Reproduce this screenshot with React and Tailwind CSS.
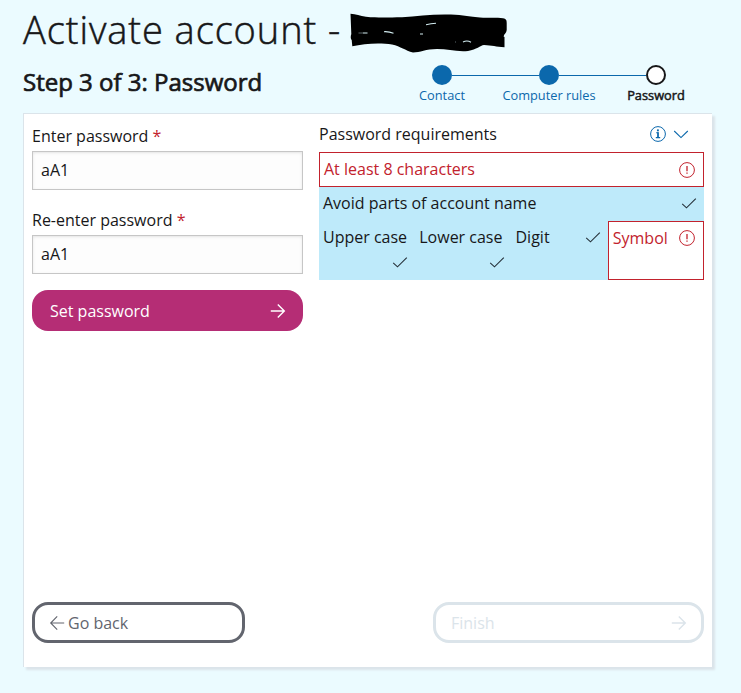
import React from 'react';

const Check = () => (
  <svg width="16" height="16" viewBox="0 0 16 16" fill="none" stroke="#26323a" strokeWidth="1.1" className="shrink-0">
    <path d="M1.2 8.8 5.5 12.8 14.8 3.6" />
  </svg>
);

const Alert = () => (
  <svg width="16" height="16" viewBox="0 0 16 16" fill="none" stroke="#c2222d" strokeWidth="1" className="shrink-0">
    <circle cx="8" cy="8" r="7.4" />
    <path d="M8 4v5.2M8 10.4v1.4" strokeWidth="1.3" />
  </svg>
);

const Info = () => (
  <svg width="16" height="16" viewBox="0 0 16 16" fill="none" stroke="#0b68ac" strokeWidth="1">
    <circle cx="8" cy="8" r="7.4" />
    <path d="M6.2 6.8h1.8v4.7M5.8 11.6h4.4" strokeWidth="1.1" />
    <path d="M8 6.3v5.3" strokeWidth="1.5" />
    <path d="M7.9 3.4v1.9" strokeWidth="1.9" />
  </svg>
);

const Arrow = ({ left = false, strokeWidth = 1.4 }) => (
  <svg width="16" height="16" viewBox="0 0 16 16" fill="none" stroke="currentColor" strokeWidth={strokeWidth} className={left ? 'rotate-180' : ''}>
    <path d="M.8 8h13.5M7.8 1.4 14.3 8l-6.500 6.600" />
  </svg>
);

const Step = ({ label, current = false, first = false, last = false }) => (
  <li className="flex w-[107px] flex-col items-center">
    <div className="flex w-full items-center">
      <span className={`h-px flex-1 ${first ? '' : 'bg-[#0b68ac]'}`} />
      <span className={`size-5 rounded-full ${current ? 'border-2 border-[#171719] bg-white' : 'bg-[#0b68ac]'}`} />
      <span className={`h-px flex-1 ${last ? '' : 'bg-[#0b68ac]'}`} />
    </div>
    <span className={`whitespace-nowrap pl-px text-[12.8px] leading-[20px] ${current ? 'text-[#171719] [-webkit-text-stroke:0.5px_#171719]' : 'text-[#0b68ac]'}`}>
      {label}
    </span>
  </li>
);

const Field = ({ id, label }) => (
  <div className="mb-4">
    <label htmlFor={id} className="block h-[29px] leading-[28px]">
      {label} <span className="text-[#c2222d]">*</span>
    </label>
    <input
      id={id}
      type="text"
      defaultValue="aA1"
      className="block h-[39px] w-full border border-[#c6c6c6] bg-[#fdfdfd] px-2 pb-[2px] shadow-[inset_0_1px_3px_#e4e4e4] outline-none"
    />
  </div>
);

// Hand-scribbled redaction over the account name
const Scribble = () => (
  <svg width="158" height="40" viewBox="350 13 158 40" className="ml-[9px] mt-[3px] shrink-0">
    <path
      d="M350.5 13.8C356 14 360 16 366 16.800C378 18 388 17.500 402 17.300C416 16.500 430 14.400 446 14.500C460 14.500 466 16 480 17.500C488 18 497 17.500 503 18.200C506 18.600 506.700 20 506.700 23V30C506.500 33 504 34 503.600 36.500L504.500 37V47.200C496 47 492 45.200 484 45C480 45.500 477 49.500 468 51C456 52 448 49 437 49C426 49 420 52.500 413 52.500C405 50.500 401 46.500 392 44.500C380 42.500 364 43.500 352.300 46.300L351.700 40C350.500 39 350.500 36 351.300 34Z"
      fill="#000"
    />
    <path d="M363 33h4.500M384 31.700q5-.3 9.500 1.500M426 24.700q5-1 10-1.400M420 34h3M463 42q4-2 8 .2" fill="none" stroke="#d3edf1" strokeWidth="1.1" />
    <path d="M358.500 33h4.500M455 42h1" fill="none" stroke="#5c696c" strokeWidth="1" />
  </svg>
);

export default function App() {
  return (
    <div className="h-[693px] w-[741px] overflow-hidden bg-[#ebfbff] pl-[23px] pr-[29px] font-['Open_Sans',sans-serif] text-base text-[#171719]">
      <header className="h-[113px]">
        <div className="flex h-[61px] items-start pt-[10px]">
          <h1 className="-mt-px whitespace-nowrap text-[38px] font-light leading-[40px] tracking-[0.93px] [-webkit-text-stroke:0.5px_#171719]">Activate account -</h1>
          <Scribble />
        </div>
        <div className="flex justify-between pr-[3px]">
          <h2 className="whitespace-nowrap pt-[3px] text-2xl leading-[36px] [-webkit-text-stroke:0.7px_#171719]">Step 3 of 3: Password</h2>
          <ol className="flex pt-1">
            <Step label="Contact" first />
            <Step label="Computer rules" />
            <Step label="Password" current last />
          </ol>
        </div>
      </header>

      <main className="flex h-[554px] flex-col justify-between border-l border-t border-[#dbe4ea] bg-white pb-6 pl-2 pr-2 shadow-[3px_3px_2px_#dbe4ea]">
        <div className="flex gap-4">
          <form className="w-[271px] pt-2">
            <Field id="password" label="Enter password" />
            <Field id="password-repeat" label="Re-enter password" />
            <button type="button" className="flex h-[41px] w-full items-center justify-between rounded-2xl bg-[#b52d75] pl-[18px] pr-[17px] text-white">
              <span>Set password</span>
              <Arrow />
            </button>
          </form>

          <section className="flex-1 pt-1.5">
            <div className="flex h-8 items-start justify-between pr-[15px]">
              <h3 className="leading-[28px]">Password requirements</h3>
              <div className="flex items-center gap-[7px] pt-1.5">
                <Info />
                <svg width="16" height="16" viewBox="0 0 16 16" fill="none" stroke="#0b68ac" strokeWidth="1.1">
                  <path d="m1.2 5 6.8 6.6L14.8 5" />
                </svg>
              </div>
            </div>
            <div className="flex h-[35px] items-center justify-between border border-[#c2222d] pl-1 pr-2 text-[#c2222d]">
              <span className="-mt-0.5">At least 8 characters</span>
              <Alert />
            </div>
            <div className="flex h-[34px] items-center justify-between bg-[#beeafa] pl-1 pr-[7px]">
              <span className="-mt-0.5">Avoid parts of account name</span>
              <span className="-mt-0.5"><Check /></span>
            </div>
            <div className="grid h-[59px] grid-cols-4 bg-[#beeafa] leading-[24px]">
              <div className="flex flex-col pl-1 pr-[7px] pt-1">
                <span className="whitespace-nowrap">Upper case</span>
                <span className="flex justify-end pt-[5px]"><Check /></span>
              </div>
              <div className="flex flex-col pl-1 pr-[7px] pt-1">
                <span className="whitespace-nowrap">Lower case</span>
                <span className="flex justify-end pt-[5px]"><Check /></span>
              </div>
              <div className="flex justify-between pl-1 pr-[7px] pt-1">
                <span>Digit</span>
                <span className="pt-1"><Check /></span>
              </div>
              <div className="flex justify-between border border-[#c2222d] bg-white pl-1 pr-2 pt-1 text-[#c2222d]">
                <span>Symbol</span>
                <span className="pt-1"><Alert /></span>
              </div>
            </div>
          </section>
        </div>

        <div className="flex justify-between">
          <button type="button" className="flex h-[41px] w-[213px] items-center gap-[3px] rounded-2xl border-3 border-[#62656e] px-[14px] text-[#62656e]">
            <Arrow left strokeWidth={1.1} />
            <span>Go back</span>
          </button>
          <button type="button" disabled className="flex h-[41px] w-[271px] items-center justify-between rounded-2xl border-3 border-[#dbe4ea] pl-[15px] pr-[14px] text-[#dbe4ea]">
            <span>Finish</span>
            <Arrow />
          </button>
        </div>
      </main>
    </div>
  );
}
